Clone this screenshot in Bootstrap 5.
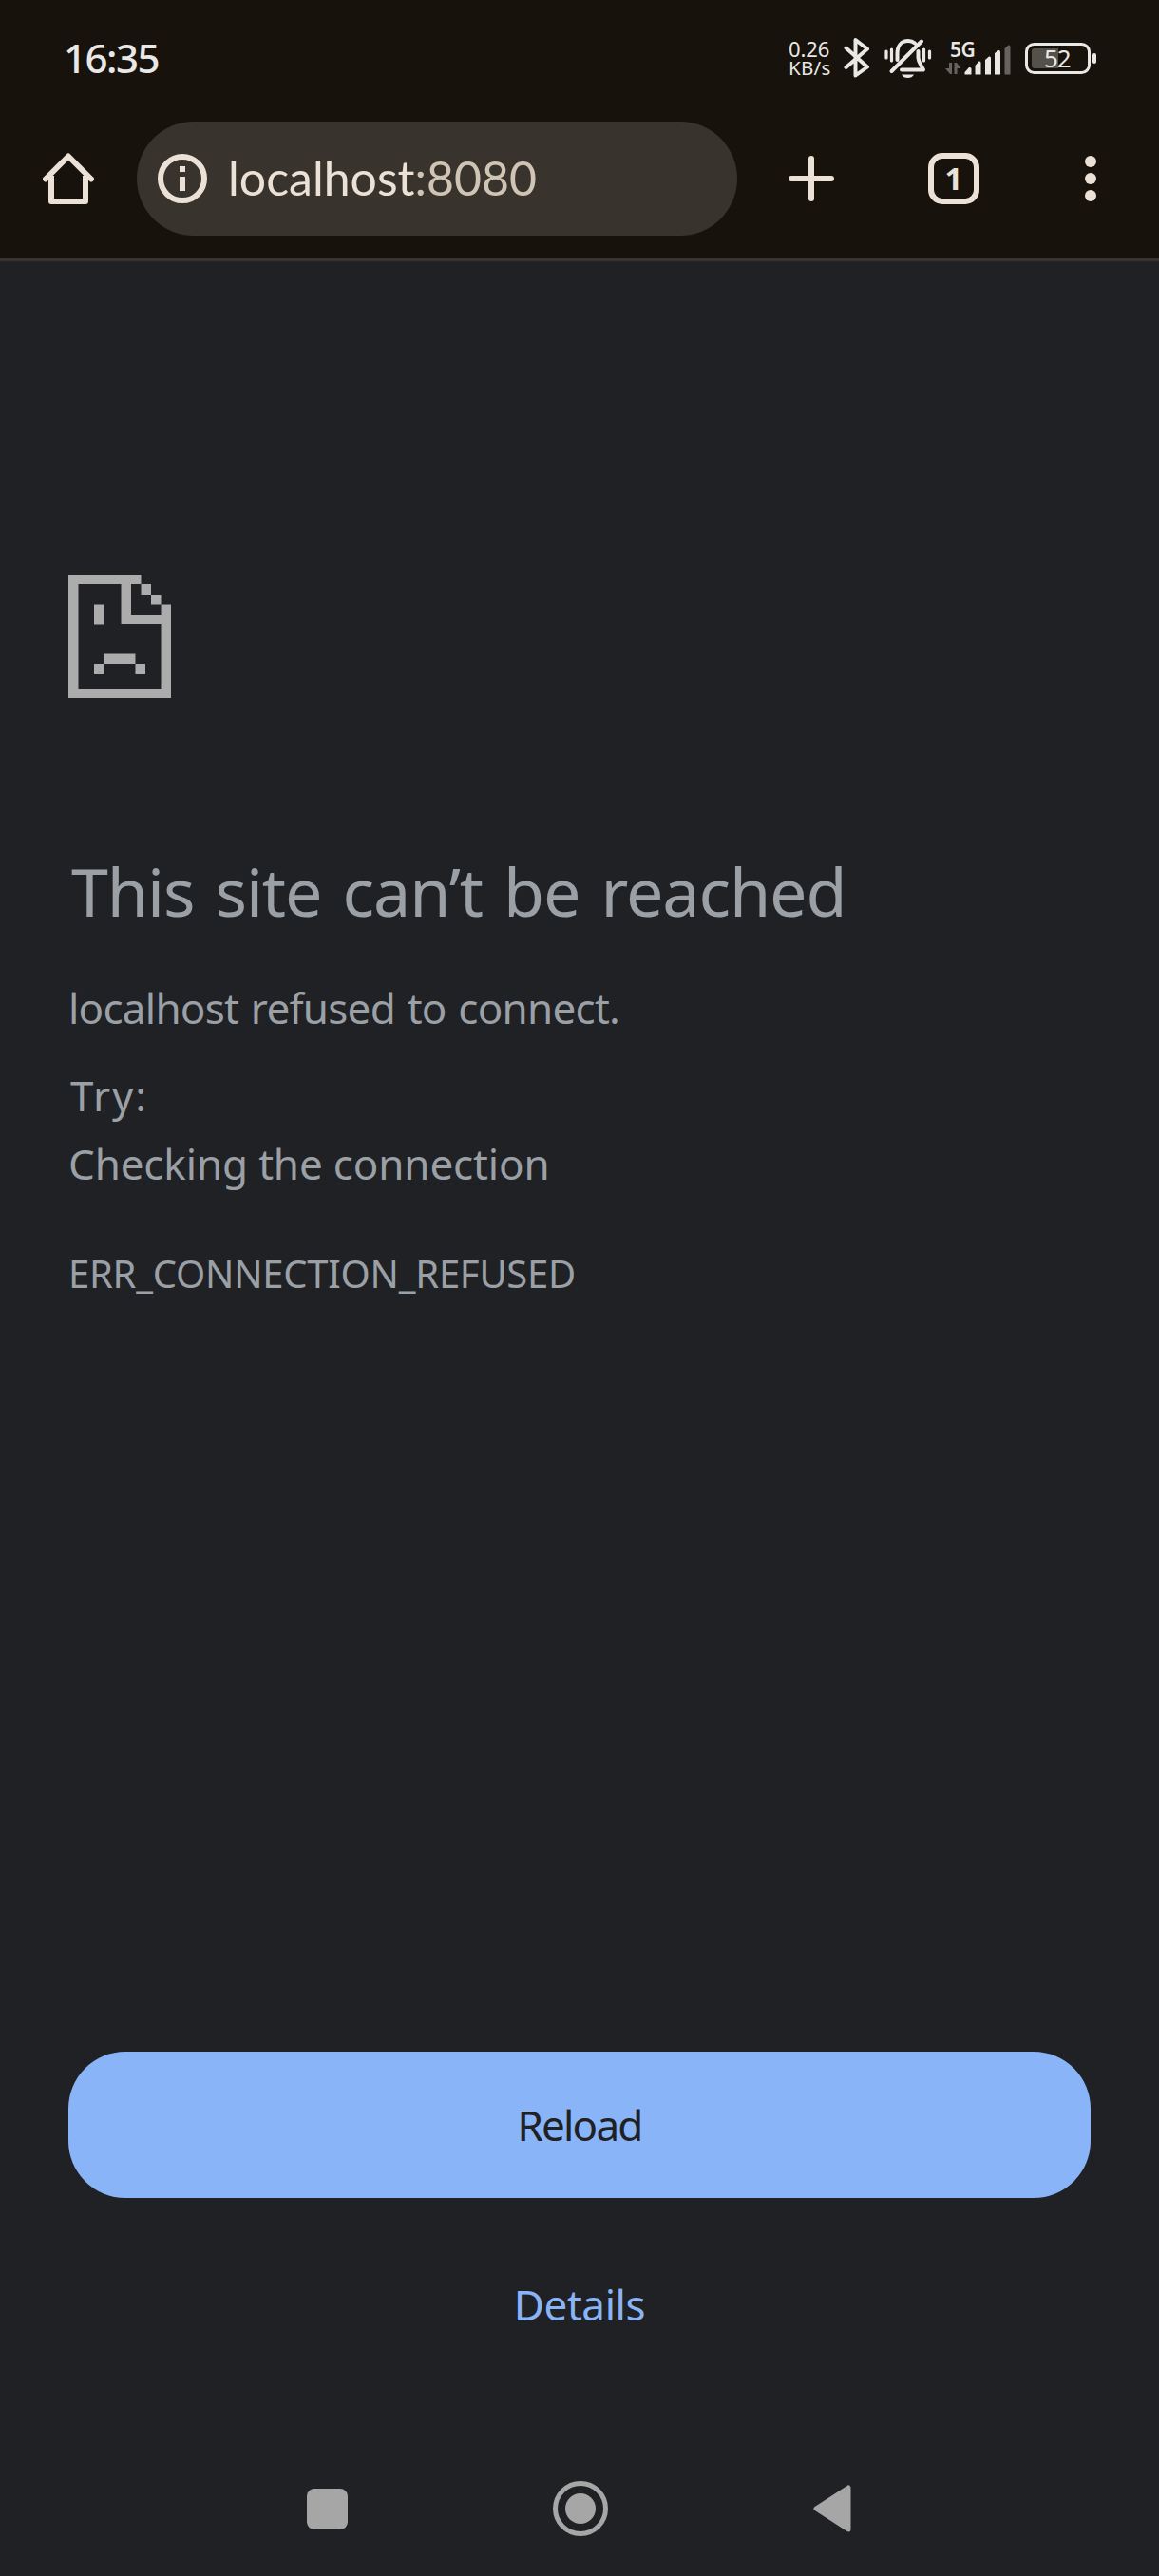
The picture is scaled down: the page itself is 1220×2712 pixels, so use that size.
<!DOCTYPE html>
<html lang="en">
<head>
<meta charset="utf-8">
<meta name="viewport" content="width=device-width, initial-scale=1">
<title>localhost</title>
<link rel="stylesheet" href="https://cdn.jsdelivr.net/npm/bootstrap@5.3.0/dist/css/bootstrap.min.css">
<style>
  html, body { height: 2712px; }
  body { background: #202124; color: #9aa0a6; font-family: "Noto Sans", sans-serif; overflow: hidden; }
  svg { display: block; flex: none; }
  .browser-top { background: #17120c; border-bottom: 3px solid #38332c; height: 275px; }

  /* status bar */
  .status-bar { height: 122px; color: #e9e8e6; padding-left: 67px; padding-right: 65px; }
  .clock { font-size: 42px; line-height: 60px; letter-spacing: -1.5px; font-weight: 500; }
  .net-speed { width: 50px; font-size: 22px; line-height: 20.5px; letter-spacing: -.1px; }
  .net-unit { font-size: 20.5px; letter-spacing: .3px; }
  .signal-label { font-size: 21px; line-height: 18px; font-weight: 600; letter-spacing: -.6px; padding-left: 5px; }
  .battery { width: 76px; height: 33px; }
  .battery-level { left: 20px; top: 0; line-height: 33px; font-size: 26px; letter-spacing: -1px; }

  /* toolbar */
  .toolbar { height: 132px; padding-left: 45px; }
  .omnibox { width: 632px; height: 120px; background: #38332c; margin-left: 45px; padding-left: 22px; }
  .url { font-family: Lato, sans-serif; font-size: 50px; line-height: 60px; color: #ebe1d6; margin: 0 0 3px 22px; }
  .url-port { color: #d0c4b5; }
  .tab-count { width: 54px; height: 54px; border: 6px solid #ebe1d6; border-radius: 15px; color: #ebe1d6; font-size: 33px; line-height: 42px; font-weight: 700; }

  /* error page */
  .error-page { height: 2289px; padding: 330px 72px 0; }
  .err-title { font-size: 70px; line-height: 96px; letter-spacing: -1.1px; word-spacing: 5px; margin: 155px 0 0 3px; font-weight: 400; }
  .err-text { font-size: 44px; line-height: 66px; letter-spacing: -.75px; word-spacing: 2px; margin: 42px 0 0; }
  .err-try { font-size: 44px; line-height: 72px; letter-spacing: 1.8px; margin: 23px 0 0 2px; }
  .err-hint { font-size: 44px; line-height: 72px; letter-spacing: -.15px; margin: 0; }
  .err-code { font-size: 40px; line-height: 60px; letter-spacing: -.25px; margin: 50px 0 0; }
  .err-actions { margin-bottom: 62px; gap: 36px; }
  .btn-reload, .btn-details { font-size: 44px; padding: 0; border: 0; }
  .btn-reload { height: 154px; border-radius: 60px; background: #8ab4f8; color: #202124; letter-spacing: -1.8px; }
  .btn-details { height: 152px; color: #8ab4f8; letter-spacing: -.4px; }

  .system-nav { height: 148px; padding: 6px 324px 0 323px; }
</style>
<script src="https://cdn.jsdelivr.net/npm/bootstrap@5.3.0/dist/js/bootstrap.bundle.min.js"></script>
</head>
<body class="d-flex flex-column">

<header class="browser-top flex-shrink-0">
  <div class="status-bar d-flex align-items-center">
    <div class="clock me-auto">16:35</div>
    <div class="net-speed"><div>0.26</div><div class="net-unit">KB/s</div></div>

    <!-- bluetooth -->
    <svg class="ms-2" width="28" height="44" viewBox="0 0 28 44" fill="none" stroke="#e9e8e6" stroke-width="4" stroke-linecap="round" stroke-linejoin="round"><path d="M2.500 11.500 25 31.500 12.500 40.500V3L25 12.500 2.500 32"/></svg>

    <!-- muted bell -->
    <svg style="margin-left:15px" width="50" height="44" viewBox="0 0 50 44" fill="none" stroke="#e9e8e6" stroke-width="4" stroke-linecap="round" stroke-linejoin="round">
      <path d="M13.500 24V17C13.500 9 18 4 25 4Q29 4 32 6.500M35.500 15V22Q36 26 38 29L41 34.500H18M7.500 36 39 4.500"/>
      <path d="M18 39.500H31Q29 43 24.500 43T18 39.500Z" fill="#e9e8e6" stroke="none"/>
      <path d="M2 15V22M7.500 13V25M41.500 13V25M47.500 15V22" stroke-width="3.200"/>
    </svg>

    <div style="margin-left:14px">
      <div class="signal-label">5G</div>
      <!-- mobile signal with data arrows -->
      <svg width="70" height="18" viewBox="0 0 70 18" overflow="visible" fill="#e9e8e6">
        <path fill="#66625d" d="M4 5H7V17H5L0 11H4ZM9.500 17V5H12L16.500 11H12.500V17Z"/>
        <path d="M20.500 17.500V15L25 10Q27.500 9.500 27.500 11.500V17.500ZM31.500 17.500V8L35.500 3.500Q37.500 3 37.500 5V17.500ZM42 17.500V2L46 -1.500Q48 -2 48 0V17.500ZM52 17.500V-5L56 -8Q58 -8.500 58 -6V17.500Z"/>
        <path fill="#66625d" d="M62.500 17.500V-10L66.500 -13.500Q68.500 -14 68.500 -12V17.500Z"/>
      </svg>
    </div>

    <div class="battery position-relative" style="margin-left:14px">
      <svg width="76" height="33" viewBox="0 0 76 33"><rect x="1.500" y="1.500" width="66" height="30" rx="8" fill="none" stroke="#e9e8e6" stroke-width="3"/><path d="M10 6H35V27H10Q7 27 7 24V9Q7 6 10 6Z" fill="#54504a"/><rect x="71" y="11" width="4" height="11" rx="2" fill="#e9e8e6"/></svg>
      <div class="battery-level position-absolute">52</div>
    </div>
  </div>

  <nav class="toolbar d-flex align-items-center">
    <svg width="54" height="56" viewBox="0 0 54 56" fill="none" stroke="#ebe1d6" stroke-width="6" stroke-linecap="round" stroke-linejoin="round"><path d="M3 28.500 27 4.500 51 28.500"/><path d="M9 25V52H45V25" stroke-linecap="butt"/></svg>
    <div class="omnibox rounded-pill d-flex align-items-center">
      <svg width="52" height="52" viewBox="0 0 52 52"><circle cx="26" cy="26" r="23" fill="none" stroke="#ebe1d6" stroke-width="6"/><path d="M23 13H29V19H23ZM23 24H29V39H23Z" fill="#ebe1d6"/></svg>
      <div class="url">localhost<span class="url-port">:8080</span></div>
    </div>
    <svg style="margin-left:54px" width="48" height="48" viewBox="0 0 48 48" stroke="#ebe1d6" stroke-width="6" stroke-linecap="round"><path d="M24 3V45M3 24H45"/></svg>
    <div class="tab-count text-center" style="margin-left:99px">1</div>
    <svg style="margin-left:111px" width="12" height="48" viewBox="0 0 12 48" fill="#ebe1d6"><circle cx="6" cy="6" r="6"/><circle cx="6" cy="24" r="6"/><circle cx="6" cy="42" r="6"/></svg>
  </nav>
</header>

<main class="error-page d-flex flex-column flex-shrink-0">
  <!-- sad page -->
  <svg width="108" height="130" viewBox="0 0 108 130" fill="#acacac">
    <path fill-rule="evenodd" d="M0 0H76.500V10H66V42H97.500V31.500H108V130H0ZM10.500 10V120H97.500V52H55.500V10Z"/>
    <path d="M76.500 10H87V21H76.500ZM87 21H97.500V31.500H87ZM27 31.500H37.500V52.500H27ZM37.500 83.500H70.500V94H37.500ZM27 94H37.500V105H27ZM70.500 94H81V105H70.500Z"/>
  </svg>
  <h1 class="err-title">This site can’t be reached</h1>
  <p class="err-text">localhost refused to connect.</p>
  <p class="err-try">Try:</p>
  <p class="err-hint">Checking the connection</p>
  <p class="err-code">ERR_CONNECTION_REFUSED</p>
  <div class="err-actions d-grid mt-auto">
    <button class="btn btn-reload" type="button">Reload</button>
    <button class="btn btn-details" type="button">Details</button>
  </div>
</main>

<footer class="system-nav d-flex align-items-center justify-content-between flex-shrink-0">
  <svg width="43" height="43" viewBox="0 0 43 43"><rect width="43" height="43" rx="8" fill="#a6a6a6"/></svg>
  <svg width="60" height="60" viewBox="0 0 60 60"><circle cx="30" cy="30" r="26.500" fill="none" stroke="#a6a6a6" stroke-width="5"/><circle cx="30" cy="30" r="16" fill="#a6a6a6"/></svg>
  <svg width="40" height="50" viewBox="0 0 40 50"><path d="M37 3V47L3 25Z" fill="#a6a6a6" stroke="#a6a6a6" stroke-width="5" stroke-linejoin="round"/></svg>
</footer>
</body>
</html>
